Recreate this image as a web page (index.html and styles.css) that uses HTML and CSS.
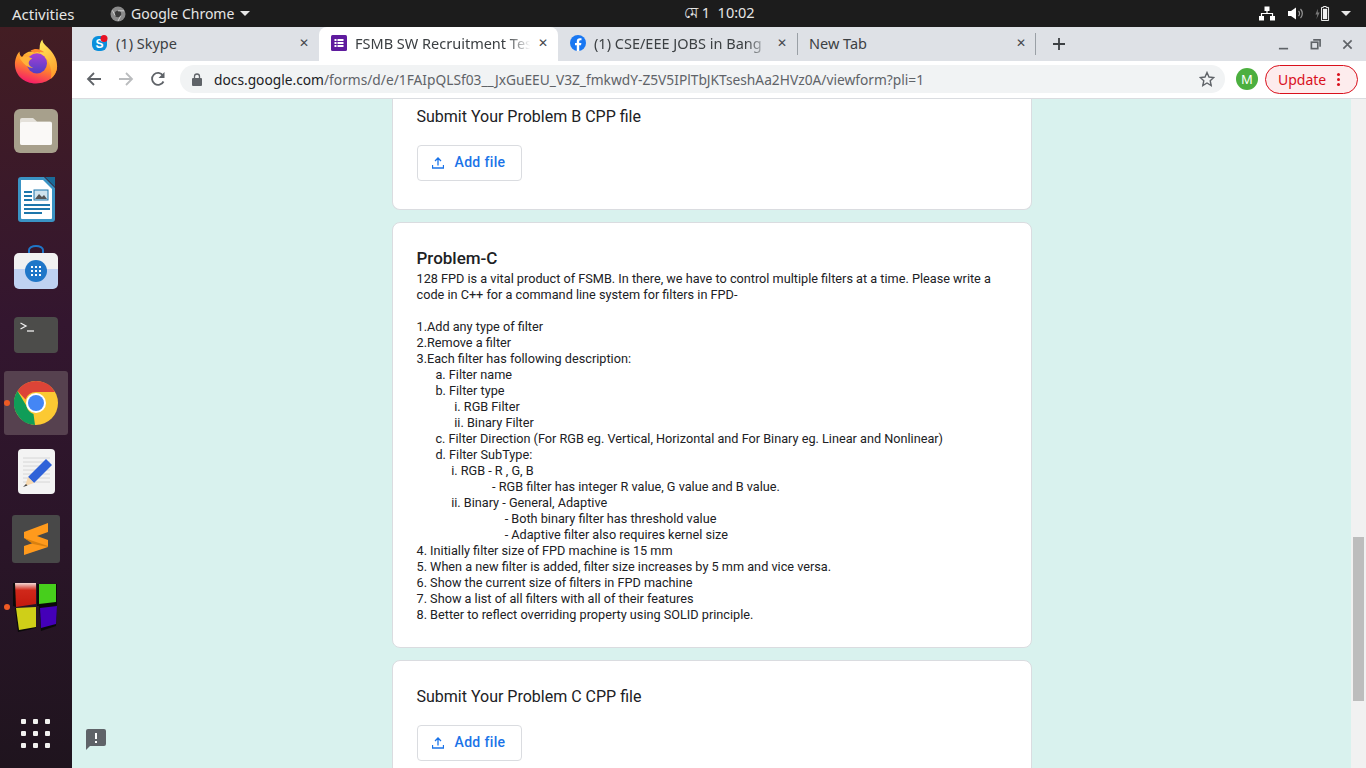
FILE: index.html
```html
<!DOCTYPE html>
<html lang="en">
    <head>
        <meta charset="UTF-8" />
        <title>FSMB SW Recruitment Test</title>
        <link rel="stylesheet" href="styles.css">
    </head>
    <body>
        <header class="topbar">
            <span class="activities">Activities</span>
            <span class="app-menu">
                <svg class="app-menu-icon" viewBox="0 0 16 16"><circle cx="8" cy="8" r="7.500" fill="#8a8a8a"/><circle cx="8" cy="8" r="3.200" fill="#3a3a3a"/><path d="M8 4.800h6M5.200 9.600 2.400 4.400M10.800 9.600 8 15" stroke="#cfcfcf" stroke-width="1"/></svg>
                Google Chrome
                <i class="caret"></i>
            </span>
            <span class="clock">মে 1&nbsp;&nbsp;10:02</span>
            <span class="status">
                <svg class="st-net" viewBox="0 0 16 14"><path d="M5.500 0h5v4.500h-5zM0 9.500h5V14H0zM11 9.500h5V14h-5z" fill="#fff"/><path d="M8 4v3M2.500 10V7h11v3" stroke="#fff" stroke-width="1.200" fill="none"/></svg>
                <svg class="st-vol" viewBox="0 0 16 14"><path d="M0 4.500h3L8 1v12L3 9.500H0z" fill="#fff"/><path d="M10.500 4.500a3.500 3.500 0 0 1 0 5M12.500 2.500a6.500 6.500 0 0 1 0 9" stroke="#9a9a9a" stroke-width="1.200" fill="none"/></svg>
                <svg class="st-bat" viewBox="0 0 16 16"><path d="M3.500 3 1 9h2L2 14l3.500-7h-2z" fill="#777"/><path d="M9.500 1.500V.5h3v1h2.500v14H7.500v-14z" fill="none" stroke="#fff" stroke-width="1"/><rect x="9" y="3" width="4.500" height="11" fill="#f2f2f2"/></svg>
                <i class="caret"></i>
            </span>
        </header>

        <div class="desktop">
            <nav class="dock">
                <div class="dock-item">
                    <svg class="dock-icon firefox" viewBox="0 0 48 48">
                        <defs>
                            <linearGradient id="fxA" x1="0.700" y1="0" x2="0.300" y2="1"><stop offset="0" stop-color="#ffd23f"/><stop offset="0.450" stop-color="#ff8a2a"/><stop offset="1" stop-color="#f5156c"/></linearGradient>
                            <linearGradient id="fxB" x1="0.500" y1="0" x2="0.500" y2="1"><stop offset="0" stop-color="#a83fd6"/><stop offset="1" stop-color="#4f3fc4"/></linearGradient>
                            <linearGradient id="fxC" x1="0.300" y1="0" x2="0.700" y2="1"><stop offset="0" stop-color="#ffe85a"/><stop offset="1" stop-color="#ff9a2a"/></linearGradient>
                        </defs>
                        <path d="M1 27c0-5 2-11 5-14 0 3 1 5 3 6 2-4 6-6 10-6l10 1 18 15c0 11-10 19-23 19C11 48 1 39 1 27z" fill="url(#fxA)"/>
                        <path d="M31 0c0 5 5 7 9 12 5 6 7 11 7 17 0 6-3 11-7 14 1-4 1-8 0-12-1-6-4-11-9-14-3-2-4-4-3-8 0-4 1-7 3-9z" fill="url(#fxC)"/>
                        <circle cx="25" cy="26" r="11" fill="url(#fxB)"/>
                        <path d="M6 20c5-3 10-2 14 1-3 1-4 3-4 5 0 2 2 4 5 5-6 0-11-4-15-11z" fill="#ffb23a"/>
                        <path d="M18 12c5-3 11-2 15 2-3 0-6-1-9 0-2 1-4 0-6-2z" fill="#ff8a2e"/>
                    </svg>
                </div>
                <div class="dock-item">
                    <svg class="dock-icon" viewBox="0 0 44 44">
                        <rect width="44" height="44" rx="6" fill="#a7a08c"/>
                        <path d="M6 11a2 2 0 0 1 2-2h11l4 3.500h13a2 2 0 0 1 2 2V34a2 2 0 0 1-2 2H8a2 2 0 0 1-2-2z" fill="#e4e1da"/>
                        <path d="M6 15a2 2 0 0 1 2-2h28a2 2 0 0 1 2 2v19a2 2 0 0 1-2 2H8a2 2 0 0 1-2-2z" fill="#faf9f7"/>
                    </svg>
                </div>
                <div class="dock-item">
                    <svg class="dock-icon writer" viewBox="0 0 37 45">
                        <path d="M3 0h23l11 11v31a3 3 0 0 1-3 3H3a3 3 0 0 1-3-3V3a3 3 0 0 1 3-3z" fill="#3a93c4"/>
                        <path d="M3 3h22l9 9v29a1 1 0 0 1-1 1H4a1 1 0 0 1-1-1z" fill="#fff"/>
                        <path d="M27 0h10v10z" fill="#1a6b99"/>
                        <path d="M6 14h8v2H6zM6 18h8v2H6zM6 22h8v2H6zM6 27h26v2H6zM6 31h26v2H6zM6 35h18v2H6z" fill="#1d76ab"/>
                        <rect x="16" y="13" width="14" height="10" fill="#cfe3ee" stroke="#1d76ab"/>
                        <path d="M17 22l4-5 3 3 2-2 3 4z" fill="#555"/>
                    </svg>
                </div>
                <div class="dock-item">
                    <svg class="dock-icon" viewBox="0 0 44 44">
                        <path d="M15 9V5a7 4 0 0 1 14 0v4" fill="none" stroke="#1f76c8" stroke-width="2"/>
                        <path d="M0 13a5 5 0 0 1 5-5h34a5 5 0 0 1 5 5v11H0z" fill="#f1f1f1"/>
                        <path d="M0 24h44v15a5 5 0 0 1-5 5H5a5 5 0 0 1-5-5z" fill="#bfd2f2"/>
                        <circle cx="22" cy="26" r="11" fill="#1f76c8"/>
                        <path d="M17 21h2v2h-2zM21 21h2v2h-2zM25 21h2v2h-2zM17 25h2v2h-2zM21 25h2v2h-2zM25 25h2v2h-2zM17 29h2v2h-2zM21 29h2v2h-2zM25 29h2v2h-2z" fill="#fff"/>
                    </svg>
                </div>
                <div class="dock-item">
                    <svg class="dock-icon" viewBox="0 0 44 36">
                        <rect width="44" height="36" rx="4" fill="#4c4c4a"/>
                        <path d="M6.500 6 12 9l-5.500 3" fill="none" stroke="#eee" stroke-width="1.300"/>
                        <path d="M13 14h7" stroke="#eee" stroke-width="1.300"/>
                    </svg>
                </div>
                <div class="dock-item active running">
                    <svg class="dock-icon" viewBox="0 0 44 44">
                        <circle cx="22" cy="22" r="22" fill="#fbc933"/>
                        <path d="M22 0a22 22 0 0 1 19 11H22a11 11 0 0 0-10.500 7.500L3.500 10A22 22 0 0 1 22 0z" fill="#dc4437"/>
                        <path d="M3.500 10l9 15a11 11 0 0 0 7 8L21 44A22 22 0 0 1 3.500 10z" fill="#109d58"/>
                        <circle cx="22" cy="22" r="10" fill="#fff"/>
                        <circle cx="22" cy="22" r="8" fill="#4486f5"/>
                    </svg>
                </div>
                <div class="dock-item">
                    <svg class="dock-icon gedit" viewBox="0 0 37 45">
                        <rect width="37" height="45" rx="4" fill="#f3f3f3"/>
                        <path d="M5 9h27M5 13h27M5 17h27M5 21h27M5 25h27M5 29h27M5 33h27" stroke="#d6d6d6"/>
                        <path d="M10 28 28 10l6 6-18 18z" fill="#2f62d8"/>
                        <path d="M10 28l6 6-9 3z" fill="#f5d7ae"/>
                        <path d="M5 38l3-3 1.500 1.500z" fill="#444"/>
                    </svg>
                </div>
                <div class="dock-item">
                    <svg class="dock-icon sublime" viewBox="0 0 48 48">
                        <rect width="48" height="48" rx="3" fill="#484848"/>
                        <path d="M36 8v9l-11 4 11 4v7l-24 8v-9l9-3-9-5v-6z" fill="#ff9a1c"/>
                        <path d="M12 23l24 8v1l-15-3z" fill="#d9800f"/>
                    </svg>
                </div>
                <div class="dock-item running">
                    <svg class="dock-icon cubes" viewBox="0 0 46 50">
                        <defs>
                            <linearGradient id="gloss" x1="0" y1="0" x2="0" y2="1"><stop offset="0" stop-color="#f3d8d4"/><stop offset="0.300" stop-color="#d0281a"/><stop offset="1" stop-color="#c41a0e"/></linearGradient>
                        </defs>
                        <path d="M0 1h3v24l-3-1zM24 2l20 0v21l-20 1zM2 26h21v20L5 50zM26 24l18-2-1 22-15 5z" fill="#0a0a0a"/>
                        <path d="M2 1h21v21L3 25z" fill="url(#gloss)"/>
                        <path d="M26 2h17v18l-17 2z" fill="#47cf1c"/>
                        <path d="M3 26l20-1v20L6 48z" fill="#cfcf18"/>
                        <path d="M27 26l17-2-1 18-15 4z" fill="#4400b8"/>
                    </svg>
                </div>
                <svg class="show-apps" viewBox="0 0 30 30">
                    <path d="M0 1a1 1 0 0 1 1-1h3a1 1 0 0 1 1 1v3a1 1 0 0 1-1 1H1a1 1 0 0 1-1-1zM12 1a1 1 0 0 1 1-1h3a1 1 0 0 1 1 1v3a1 1 0 0 1-1 1h-3a1 1 0 0 1-1-1zM24 1a1 1 0 0 1 1-1h3a1 1 0 0 1 1 1v3a1 1 0 0 1-1 1h-3a1 1 0 0 1-1-1zM0 13a1 1 0 0 1 1-1h3a1 1 0 0 1 1 1v3a1 1 0 0 1-1 1H1a1 1 0 0 1-1-1zM12 13a1 1 0 0 1 1-1h3a1 1 0 0 1 1 1v3a1 1 0 0 1-1 1h-3a1 1 0 0 1-1-1zM24 13a1 1 0 0 1 1-1h3a1 1 0 0 1 1 1v3a1 1 0 0 1-1 1h-3a1 1 0 0 1-1-1zM0 25a1 1 0 0 1 1-1h3a1 1 0 0 1 1 1v3a1 1 0 0 1-1 1H1a1 1 0 0 1-1-1zM12 25a1 1 0 0 1 1-1h3a1 1 0 0 1 1 1v3a1 1 0 0 1-1 1h-3a1 1 0 0 1-1-1zM24 25a1 1 0 0 1 1-1h3a1 1 0 0 1 1 1v3a1 1 0 0 1-1 1h-3a1 1 0 0 1-1-1z" fill="#f2f2f0"/>
                </svg>
            </nav>

            <div class="browser">
                <div class="tabstrip">
                    <div class="tab">
                        <svg class="favicon" viewBox="0 0 16 16"><rect y="1" width="15" height="15" rx="6" fill="#0a8fdc"/><text x="7.500" y="13" text-anchor="middle" class="favicon-s">S</text><circle cx="12" cy="3.500" r="3.500" fill="#e81123"/></svg>
                        <span class="tab-title">(1) Skype</span>
                        <span class="tab-close">✕</span>
                    </div>
                    <div class="tab tab-active">
                        <svg class="favicon" viewBox="0 0 16 16"><rect width="16" height="16" rx="1.500" fill="#5f1c9e"/><path d="M3.500 4h2v2h-2zM6.500 4h6v2h-6zM3.500 7h2v2h-2zM6.500 7h6v2h-6zM3.500 10h2v2h-2zM6.500 10h6v2h-6z" fill="#fff"/></svg>
                        <span class="tab-title tab-fade">FSMB SW Recruitment Tes</span>
                        <span class="tab-close">✕</span>
                    </div>
                    <div class="tab">
                        <svg class="favicon" viewBox="0 0 16 16"><circle cx="8" cy="8" r="8" fill="#1877f2"/><path d="M6.800 16V10.300H5V8h1.800V6.300c0-2 1.200-3.100 3-3.100.9 0 1.700.1 1.700.1v2h-1c-1 0-1.300.6-1.300 1.200V8h2.200l-.4 2.300H9.200V16z" fill="#fff"/></svg>
                        <span class="tab-title tab-fade">(1) CSE/EEE JOBS in Bang</span>
                        <span class="tab-close">✕</span>
                    </div>
                    <div class="tab tab-new">
                        <span class="tab-title">New Tab</span>
                        <span class="tab-close">✕</span>
                    </div>
                    <svg class="new-tab" viewBox="0 0 12 12"><path d="M6 0v12M0 6h12" stroke="#3c4043" stroke-width="1.800"/></svg>
                    <div class="window-btns">
                        <svg viewBox="0 0 12 12"><path d="M1 10.500h10" stroke="#5f6368" stroke-width="1.800"/></svg>
                        <svg viewBox="0 0 12 12"><path d="M3.500 1h7.500v7.500" fill="none" stroke="#5f6368" stroke-width="1.800"/><rect x="1.500" y="3.500" width="7" height="7" fill="none" stroke="#5f6368" stroke-width="1.800"/></svg>
                        <svg viewBox="0 0 12 12"><path d="M1.500 1.500l9 9M10.500 1.500l-9 9" stroke="#5f6368" stroke-width="1.800"/></svg>
                    </div>
                </div>

                <div class="toolbar">
                    <svg class="nav-icon" viewBox="0 0 16 16"><path d="M15 8H2M8 2 2 8l6 6" fill="none" stroke="#5f6368" stroke-width="1.800"/></svg>
                    <svg class="nav-icon" viewBox="0 0 16 16"><path d="M1 8h13M8 2l6 6-6 6" fill="none" stroke="#babcbe" stroke-width="1.800"/></svg>
                    <svg class="nav-icon" viewBox="0 0 16 16"><path d="M13.500 10.500A6 6 0 1 1 13 4.500" fill="none" stroke="#5f6368" stroke-width="1.800"/><path d="M14.500 1v6h-6z" fill="#5f6368"/></svg>
                    <div class="omnibox">
                        <svg class="lock" viewBox="0 0 10 13"><path d="M2.500 5.500V3.500a2.500 2.500 0 0 1 5 0v2" fill="none" stroke="#5f6368" stroke-width="1.300"/><rect y="5" width="10" height="8" rx="1" fill="#5f6368"/></svg>
                        <span class="url"><b>docs.google.com</b>/forms/d/e/1FAIpQLSf03__JxGuEEU_V3Z_fmkwdY-Z5V5IPlTbJKTseshAa2HVz0A/viewform?pli=1</span>
                        <svg class="star" viewBox="0 0 16 16"><path d="M8 1.500l2 4.500 4.800.5-3.600 3.200 1 4.800L8 12l-4.200 2.500 1-4.800L1.200 6.500 6 6z" fill="none" stroke="#5f6368" stroke-width="1.400"/></svg>
                    </div>
                    <span class="avatar">M</span>
                    <span class="update">Update <i class="dots"></i></span>
                </div>

                <div class="viewport">
                    <main class="page">
                        <section class="card card-cut">
                            <h2 class="card-title">Submit Your Problem B CPP file</h2>
                            <button class="add-file">
                                <svg viewBox="0 0 12 12"><path d="M6 8.500V1.500M3 4l3-3 3 3M.5 8v3h11V8" fill="none" stroke="#1a73e8" stroke-width="1.300"/></svg>
                                Add file
                            </button>
                        </section>
                        <section class="card card-problem">
                            <h2 class="problem-title">Problem-C</h2>
                            <p class="problem-text">128 FPD is a vital product of FSMB. In there, we have to control multiple filters at a time. Please write a code in C++ for a command line system for filters in FPD-

1.Add any type of filter
2.Remove a filter
3.Each filter has following description:
      a. Filter name
      b. Filter type
            i. RGB Filter
            ii. Binary Filter
      c. Filter Direction (For RGB eg. Vertical, Horizontal and For Binary eg. Linear and Nonlinear)
      d. Filter SubType:
           i. RGB - R , G, B
                        - RGB filter has integer R value, G value and B value.
           ii. Binary - General, Adaptive
                            - Both binary filter has threshold value
                            - Adaptive filter also requires kernel size
4. Initially filter size of FPD machine is 15 mm
5. When a new filter is added, filter size increases by 5 mm and vice versa.
6. Show the current size of filters in FPD machine
7. Show a list of all filters with all of their features
8. Better to reflect overriding property using SOLID principle.</p>
                        </section>
                        <section class="card card-submit">
                            <h2 class="card-title">Submit Your Problem C CPP file</h2>
                            <button class="add-file">
                                <svg viewBox="0 0 12 12"><path d="M6 8.500V1.500M3 4l3-3 3 3M.5 8v3h11V8" fill="none" stroke="#1a73e8" stroke-width="1.300"/></svg>
                                Add file
                            </button>
                        </section>
                    </main>
                    <div class="feedback-col">
                        <svg class="feedback" viewBox="0 0 22 22"><path d="M3 1h16a2 2 0 0 1 2 2v13a2 2 0 0 1-2 2H5l-4 4V3a2 2 0 0 1 2-2z" fill="#5f6368"/><path d="M10 5h2v6h-2zM10 13h2v2h-2z" fill="#fff"/></svg>
                    </div>
                    <div class="scrollbar"><div class="scroll-thumb"></div></div>
                </div>
            </div>
        </div>
    </body>
</html>
```

FILE: styles.css
```css
* {
    margin: 0;
    padding: 0;
    box-sizing: border-box;
}
html,
body {
    width: 1366px;
    height: 768px;
    overflow: hidden;
}
body {
    display: flex;
    flex-direction: column;
    font-family: "Noto Sans", sans-serif;
    background: #1c1c1c;
}

/* gnome top bar */
.topbar {
    display: flex;
    align-items: center;
    height: 27px;
    flex: none;
    background: #1c1c1c;
    color: #e6e6e6;
    font-size: 14px;
    padding-left: 12px;
}
.activities {
    width: 97px;
    font-size: 15px;
}
.app-menu {
    display: flex;
    align-items: center;
    width: 575px;
}
.app-menu-icon {
    width: 16px;
    height: 16px;
    margin-right: 5px;
    margin-left: 1px;
}
.caret {
    display: inline-block;
    border-left: 5px solid transparent;
    border-right: 5px solid transparent;
    border-top: 5px solid #e6e6e6;
    margin-left: 6px;
}
.clock {
    font-size: 14.500px;
    width: 575px;
}
.status {
    display: flex;
    align-items: center;
}
.status svg {
    height: 15px;
    width: 16px;
}
.st-net {
    margin-right: 13px;
}
.st-vol {
    margin-right: 10px;
}
.st-bat {
    margin-right: 5px;
}

.desktop {
    display: flex;
    flex: 1;
    min-height: 0;
}

/* dock */
.dock {
    width: 72px;
    flex: none;
    display: flex;
    flex-direction: column;
    align-items: center;
    padding-top: 2px;
    background: linear-gradient(#431d23, #33162f 40%, #2a1528 70%, #1f141e);
}
.dock-item {
    position: relative;
    width: 64px;
    height: 64px;
    margin: 2px 0;
    display: flex;
    align-items: center;
    justify-content: center;
    border-radius: 3px;
}
.dock-item.active {
    background: #56414f;
}
.dock-item.running::before {
    content: "";
    position: absolute;
    left: 0;
    top: 29px;
    width: 6px;
    height: 6px;
    border-radius: 50%;
    background: #ee5a24;
}
.dock-icon {
    width: 44px;
    height: 44px;
}
.firefox {
    height: 47px;
    margin-top: -4px;
}
.writer,
.gedit {
    width: 37px;
    height: 45px;
}
.sublime {
    width: 48px;
    height: 48px;
}
.cubes {
    width: 46px;
    height: 50px;
}
.show-apps {
    width: 30px;
    height: 30px;
    margin-top: auto;
    margin-bottom: 19px;
}

/* chrome */
.browser {
    flex: 1;
    min-width: 0;
    display: flex;
    flex-direction: column;
}
.tabstrip {
    height: 34px;
    flex: none;
    display: flex;
    align-items: stretch;
    padding-left: 8px;
    background: #dee1e6;
    color: #3c4043;
    font-size: 14.500px;
}
.tab {
    width: 239px;
    display: flex;
    align-items: center;
    padding: 0 8px 2px 12px;
    position: relative;
}
.tab-active {
    background: #fff;
    border-radius: 8px 8px 0 0;
}
.tab-new {
    padding: 0 7px 2px 11px;
    border-left: 1px solid #9aa0a6;
    border-right: 1px solid #9aa0a6;
    margin: 6px 0;
}
.favicon {
    width: 16px;
    height: 16px;
    flex: none;
    margin-right: 8px;
}
.favicon-s {
    font: bold 12px "Liberation Sans", sans-serif;
    fill: #fff;
}
.tab-title {
    flex: 1;
    min-width: 0;
    margin-right: 2px;
    white-space: nowrap;
}
.tab-fade {
    -webkit-mask-image: linear-gradient(90deg, #000 85%, transparent 98%);
    mask-image: linear-gradient(90deg, #000 85%, transparent 98%);
}
.tab-close {
    flex: none;
    width: 14px;
    font-size: 12px;
    font-weight: bold;
    text-align: center;
    color: #45484c;
    font-family: "DejaVu Sans", sans-serif;
}
.new-tab {
    width: 12px;
    height: 12px;
    margin: 11px 0 0 17px;
}
.window-btns {
    display: flex;
    align-items: center;
    gap: 21px;
    margin-left: auto;
    padding-right: 13px;
}
.window-btns svg {
    width: 11px;
    height: 11px;
}
.toolbar {
    height: 38px;
    flex: none;
    display: flex;
    align-items: center;
    padding: 0 8px 1px 14px;
    gap: 16px;
    background: #fff;
    border-bottom: 1px solid #dadce0;
}
.nav-icon {
    width: 16px;
    height: 16px;
}
.omnibox {
    flex: 1;
    min-width: 0;
    height: 28px;
    margin-left: -2px;
    display: flex;
    align-items: center;
    padding: 0 10px 0 12px;
    background: #f1f3f4;
    border-radius: 14px;
    font-size: 13.750px;
    color: #5f6368;
}
.lock {
    width: 10px;
    height: 13px;
    margin-right: 12px;
    flex: none;
}
.url {
    flex: 1;
    white-space: nowrap;
    overflow: hidden;
}
.url b {
    font-weight: normal;
    color: #202124;
}
.star {
    width: 16px;
    height: 16px;
    flex: none;
}
.avatar {
    width: 22px;
    height: 22px;
    margin-left: -5px;
    border-radius: 50%;
    background: #4caf3f;
    color: #fff;
    font-size: 13px;
    text-align: center;
    line-height: 22px;
}
.update {
    display: flex;
    align-items: center;
    width: 93px;
    height: 29px;
    margin-left: -9px;
    padding-left: 12px;
    border: 1px solid #d9101c;
    border-radius: 15px;
    background: #fdeced;
    color: #d9101c;
    font-size: 14px;
}
.dots {
    width: 3px;
    height: 3px;
    margin-left: 11px;
    border-radius: 50%;
    background: #d9101c;
    box-shadow: 0 -5px #d9101c, 0 5px #d9101c;
}

/* form page */
.viewport {
    flex: 1;
    min-height: 0;
    display: flex;
    background: #d9f2ee;
    overflow: hidden;
    position: relative;
}
.page {
    flex: 1;
    min-width: 0;
    display: flex;
    flex-direction: column;
    align-items: center;
    gap: 12px;
}
.card {
    width: 640px;
    flex: none;
    background: #fff;
    border: 1px solid #dadce0;
    border-radius: 8px;
    padding: 0 24px;
    color: #202124;
}
.card-cut {
    height: 111px;
    border-top: 0;
    border-radius: 0 0 8px 8px;
    padding-top: 8px;
}
.card-submit {
    height: 130px;
    padding-top: 26px;
}
.card-title {
    font: 400 16px/20px Roboto, sans-serif;
}
.add-file {
    display: flex;
    align-items: center;
    width: 105px;
    height: 36px;
    margin-top: 18px;
    padding: 0 0 2px 14px;
    background: #fff;
    border: 1px solid #dadce0;
    border-radius: 4px;
    color: #1a73e8;
    font: 500 14px Roboto, sans-serif;
    letter-spacing: 0.350px;
}
.add-file svg {
    width: 12px;
    height: 12px;
    margin: 2px 11px 0 0;
}
.card-problem {
    height: 426px;
    padding-top: 25px;
}
.problem-title {
    font: 500 17px/20px Roboto, sans-serif;
}
.problem-text {
    margin-top: 3px;
    font: 400 12.700px/16px Roboto, sans-serif;
    white-space: pre-wrap;
}
.feedback-col {
    position: absolute;
    left: 13px;
    bottom: 18px;
}
.feedback {
    display: block;
    width: 22px;
    height: 22px;
}
.scrollbar {
    width: 15px;
    flex: none;
    background: #f1f1f1;
    padding: 438px 2px 0;
}
.scroll-thumb {
    height: 164px;
    background: #bdbdbd;
}
```
